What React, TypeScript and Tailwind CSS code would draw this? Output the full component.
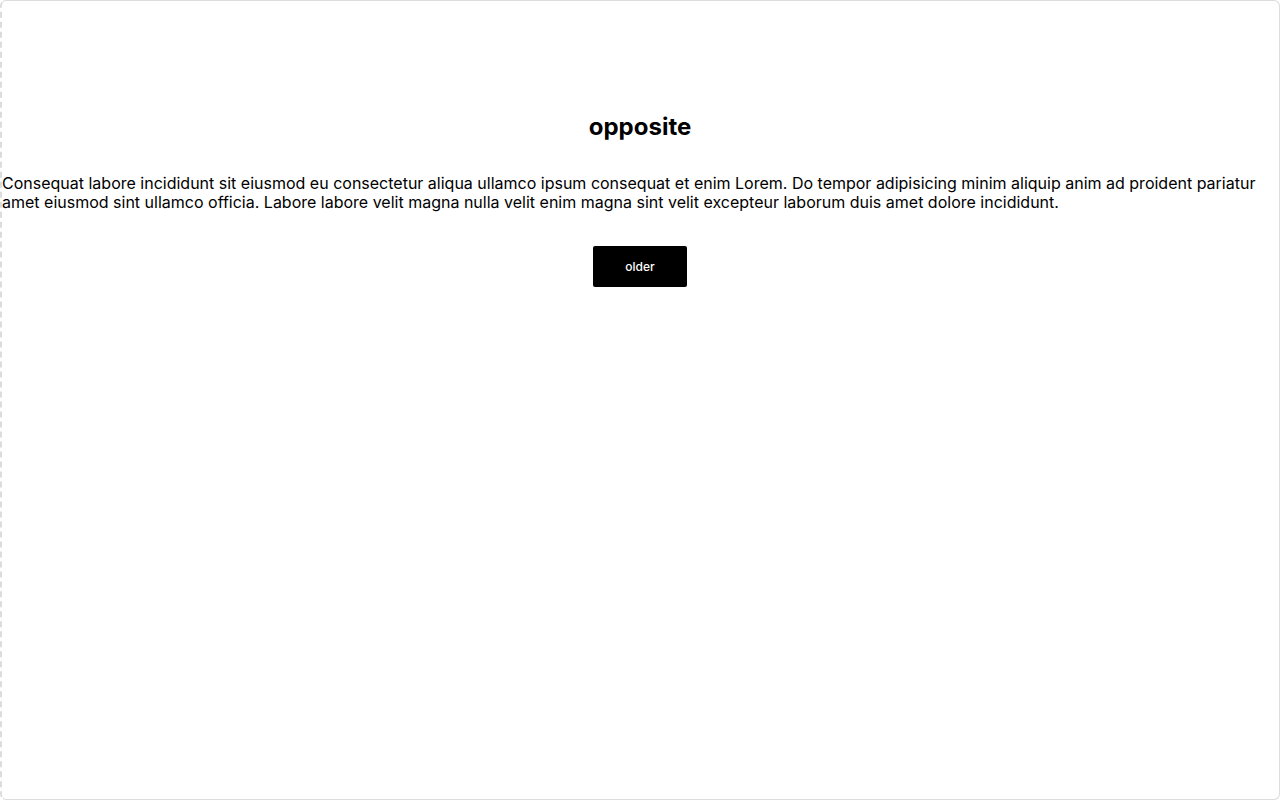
import React from 'react';

const App: React.FC = () => {
  return (
    <div
      className="h-[800px] w-[1280px] rounded-md border border-l-2 border-solid border-[#dcdcdc] [border-left-style:dashed] bg-white text-black"
      style={{ fontFamily: 'Inter, "Noto Sans", sans-serif' }}
    >
      <div className="flex flex-col items-center pt-[111px] pr-px">
        <h1 className="text-2xl font-bold leading-[normal]">opposite</h1>
        <p className="mt-[33px] w-full text-left text-base leading-[19px]">
          Consequat labore incididunt sit eiusmod eu consectetur aliqua ullamco ipsum consequat et enim Lorem. Do tempor adipisicing minim aliquip anim ad proident pariatur amet eiusmod sint ullamco officia. Labore labore velit magna nulla velit enim magna sint velit excepteur laborum duis amet dolore incididunt.
        </p>
        <button className="mt-[34px] h-[41px] w-[94px] rounded-[2px] bg-black text-xs font-medium text-white">
          older
        </button>
      </div>
    </div>
  );
};

export default App;
